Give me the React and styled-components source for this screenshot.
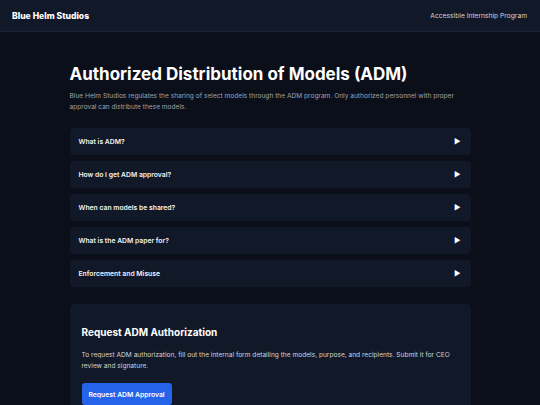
import { createGlobalStyle, styled } from 'styled-components';

const GlobalStyle = createGlobalStyle`
  * { box-sizing: border-box; }
  body {
    margin: 0;
    background: #0b0f1a;
    color: #f3f4f6;
    font-family: Inter, "Liberation Sans", sans-serif;
  }
`;

const questions = [
  'What is ADM?',
  'How do I get ADM approval?',
  'When can models be shared?',
  'What is the ADM paper for?',
  'Enforcement and Misuse',
];

function App() {
  return (
    <>
      <GlobalStyle />
      <Header>
        <Brand>Blue Helm Studios</Brand>
        <Tagline>Accessible Internship Program</Tagline>
      </Header>
      <Main>
        <Title>Authorized Distribution of Models (ADM)</Title>
        <Intro>
          Blue Helm Studios regulates the sharing of select models through the ADM program. Only
          authorized personnel with proper approval can distribute these models.
        </Intro>
        <FaqList>
          {questions.map((q) => (
            <FaqItem key={q}>
              <span>{q}</span>
              <Arrow>▶</Arrow>
            </FaqItem>
          ))}
        </FaqList>
        <RequestCard>
          <CardTitle>Request ADM Authorization</CardTitle>
          <CardText>
            To request ADM authorization, fill out the internal form detailing the models, purpose,
            and recipients. Submit it for CEO review and signature.
          </CardText>
          <PrimaryButton type="button">Request ADM Approval</PrimaryButton>
        </RequestCard>
      </Main>
    </>
  );
}

const Header = styled.header`
  height: 32px;
  padding: 0 13px 0 12px;
  display: flex;
  align-items: center;
  justify-content: space-between;
  background: #111827;
  border-bottom: 1px solid #1c2333;
`;

const Brand = styled.div`
  font-size: 8.6px;
  font-weight: 800;
  color: #ffffff;
`;

const Tagline = styled.div`
  font-size: 6.7px;
  color: #d1d5db;
`;

const Main = styled.main`
  width: 401px;
  margin: 0 auto;
  padding-top: 30px;
`;

const Title = styled.h1`
  margin: 0;
  font-size: 17px;
  line-height: 24px;
  font-weight: 700;
  color: #ffffff;
`;

const Intro = styled.p`
  margin: 5px 0 0;
  font-size: 6.6px;
  line-height: 11px;
  color: #9ca3af;
`;

const FaqList = styled.div`
  margin-top: 15px;
  display: flex;
  flex-direction: column;
  gap: 6px;
`;

const FaqItem = styled.div`
  height: 27px;
  padding: 0 10px 0 9px;
  display: flex;
  align-items: center;
  justify-content: space-between;
  background: #111827;
  border-radius: 4px;
  font-size: 6.8px;
  font-weight: 600;
  color: #f3f4f6;
`;

const Arrow = styled.span`
  font-size: 7px;
  color: #ffffff;
`;

const RequestCard = styled.section`
  margin-top: 17px;
  padding: 21px 12px 20px;
  background: #111827;
  border-radius: 5px;
`;

const CardTitle = styled.h2`
  margin: 0;
  font-size: 10px;
  line-height: 14px;
  font-weight: 700;
  color: #ffffff;
`;

const CardText = styled.p`
  margin: 11px 0 0;
  font-size: 6.6px;
  line-height: 11px;
  color: #d1d5db;
`;

const PrimaryButton = styled.button`
  margin-top: 11px;
  height: 22px;
  padding: 0 7px;
  border: none;
  border-radius: 3px;
  background: #2563eb;
  color: #ffffff;
  font-family: inherit;
  font-size: 6.8px;
  font-weight: 600;
  cursor: pointer;
`;

export default App;
